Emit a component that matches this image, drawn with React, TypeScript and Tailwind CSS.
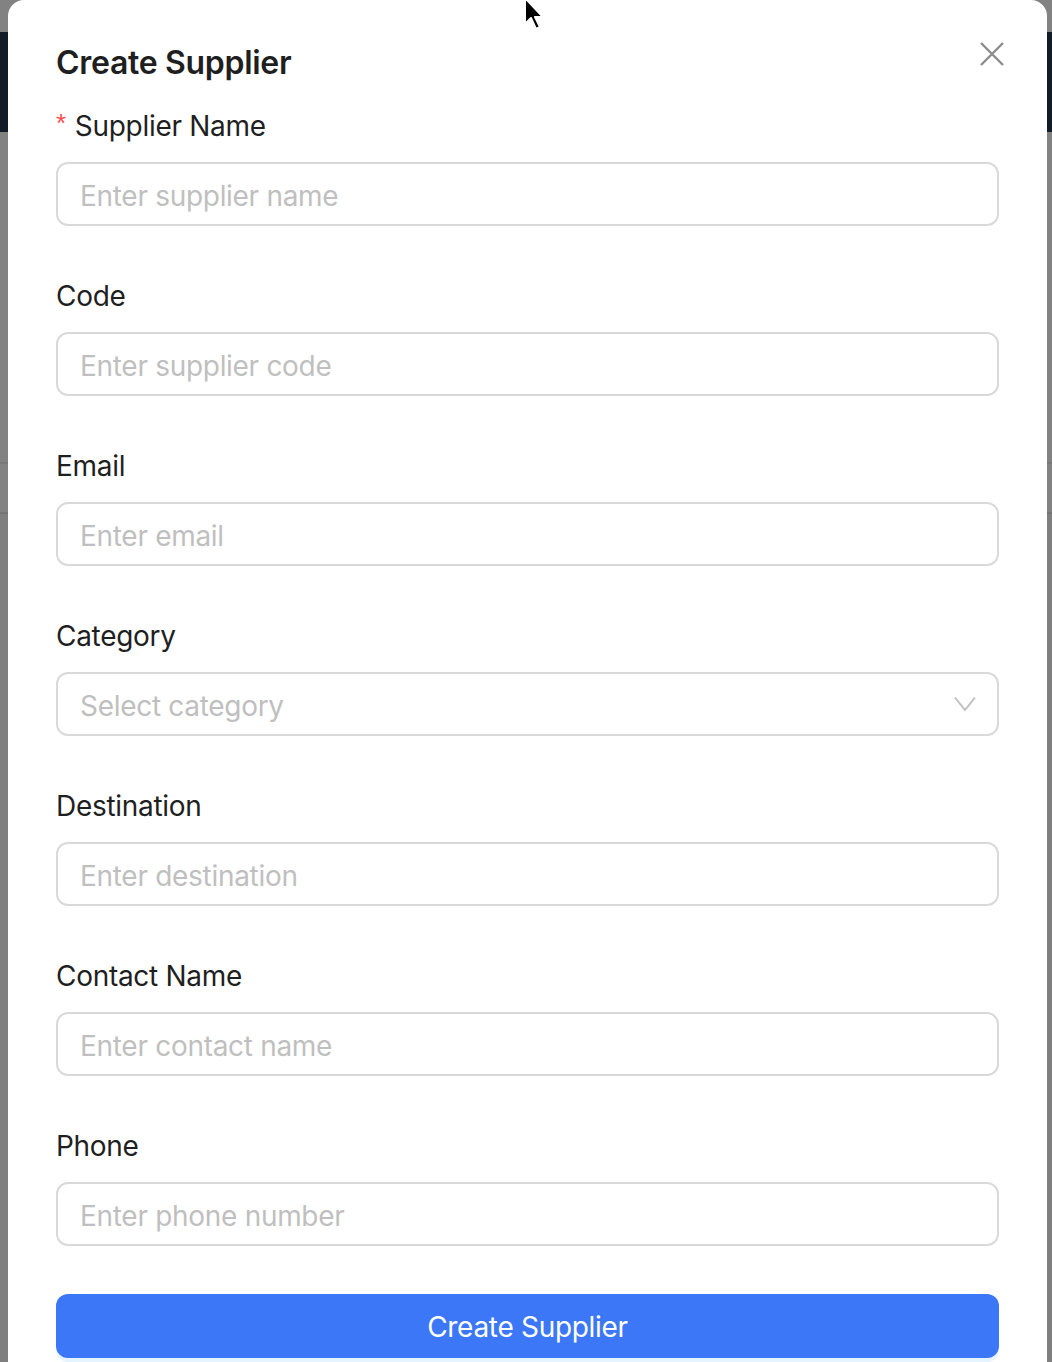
const fields = [
  { label: "Supplier Name", placeholder: "Enter supplier name", required: true },
  { label: "Code", placeholder: "Enter supplier code" },
  { label: "Email", placeholder: "Enter email" },
  { label: "Category", placeholder: "Select category", select: true },
  { label: "Destination", placeholder: "Enter destination" },
  { label: "Contact Name", placeholder: "Enter contact name" },
  { label: "Phone", placeholder: "Enter phone number" },
];

export default function App() {
  return (
    <div className="relative w-[1052px] h-[1362px] overflow-hidden bg-[#828282] font-['Inter',sans-serif] tracking-[-0.3px]">
      {/* Dimmed page behind the modal */}
      <div className="h-8" />
      <div className="h-[100px] bg-[#121c29]" />
      <div className="h-[330px]" />
      <div className="h-[50px] border-t-2 border-[#777]" />
      <div className="h-[850px] border-t-2 border-[#747474] bg-[#7f7f7f]" />

      {/* Modal */}
      <div className="absolute left-2 top-0 w-[1039px] h-[1400px] bg-white rounded-t-2xl pt-10 px-12">
        <h2 className="text-[32px] leading-[46px] font-semibold text-[#1f1f1f] mb-[18px]">
          Create Supplier
        </h2>

        <button className="absolute right-[43px] top-[42px] text-[#8c8c8c]">
          <svg width="24" height="24" viewBox="0 0 24 24" fill="none" stroke="currentColor" strokeWidth="2.4">
            <path d="M1 1L23 23M23 1L1 23" />
          </svg>
        </button>

        <form>
          {fields.map((f) => (
            <div key={f.label} className="mb-12">
              <label className="flex items-center text-[28px] leading-[44px] text-[#1f1f1f] mb-[14px]">
                {f.required && (
                  <span className="text-[#ff4d4f] text-[26px] mr-[9px] font-['Liberation_Sans',sans-serif] relative -top-[3px]">*</span>
                )}
                {f.label}
              </label>
              {f.select ? (
                <div className="h-16 flex items-center justify-between border-2 border-[#d9d9d9] rounded-xl pl-[22px] pr-[21px] pt-[3px] text-[28px] text-[#bfbfbf]">
                  <span>{f.placeholder}</span>
                  <svg width="22" height="16" viewBox="0 0 22 16" fill="none" stroke="#bfbfbf" strokeWidth="2" className="-mt-[3px]">
                    <path d="M1 1.5L11 14L21 1.5" />
                  </svg>
                </div>
              ) : (
                <input
                  placeholder={f.placeholder}
                  className="w-full h-16 border-2 border-[#d9d9d9] rounded-xl px-[22px] pt-[3px] text-[28px] text-[#1f1f1f] placeholder:text-[#bfbfbf] outline-none"
                />
              )}
            </div>
          ))}

          <button
            type="button"
            className="w-full h-16 rounded-xl bg-[#3b77f6] text-white text-[28px] pt-[2px] shadow-[0_4px_0_rgba(5,145,255,0.1)]"
          >
            Create Supplier
          </button>
        </form>
      </div>

      {/* Mouse cursor */}
      <svg className="absolute left-[522px] -top-[4px]" width="26" height="38" viewBox="0 0 26 38">
        <path
          d="M3 2 L3 28 L9 22 L14 33 L18 31 L13 21 L21 21 Z"
          fill="#000"
          stroke="#fff"
          strokeWidth="2"
          strokeLinejoin="round"
        />
      </svg>
    </div>
  );
}
